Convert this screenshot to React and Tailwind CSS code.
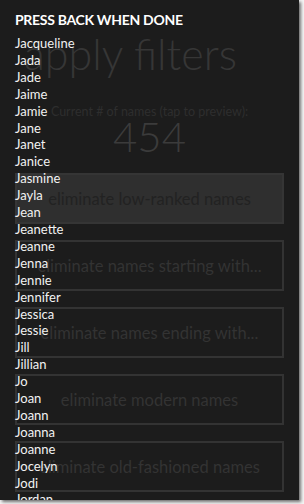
export default function App() {
  const names = [
    "Jacqueline","Jada","Jade","Jaime","Jamie","Jane","Janet","Janice","Jasmine","Jayla","Jean","Jeanette","Jeanne","Jenna","Jennie","Jennifer","Jessica","Jessie","Jill","Jillian","Jo","Joan","Joann","Joanna","Joanne","Jocelyn","Jodi","Jordan",
  ];
  const filters = [
    "eliminate names starting with...",
    "eliminate names ending with...",
    "eliminate modern names",
    "eliminate old-fashioned names",
  ];
  return (
    <div className="w-[304px] h-[504px] bg-[#f4f4f4] overflow-hidden" style={{ fontFamily: "Lato, 'Noto Sans', sans-serif" }}>
      <div className="relative w-[299px] h-[500px] bg-[#1c1c1c] overflow-hidden shadow-[2px_2px_3px_rgba(0,0,0,0.55)]">
        {/* faded page behind */}
        <div className="flex flex-col">
          <div className="pl-[24px] pt-[30px] text-[43px] leading-[48px] font-light text-[#363636]">apply filters</div>
          <div className="mt-[26px] text-center text-[12.5px] leading-[16px] text-[#2e2e2e]">Current # of names (tap to preview):</div>
          <div className="text-center text-[42px] leading-[32px] font-light text-[#3b3b3b]">454</div>
          <div className="mt-[21px] flex flex-col gap-[16px] px-[15px]">
            <div className="h-[51px] border-2 border-[#353535] bg-[#2f2f2f] flex items-center justify-center pt-[2px] text-[16.5px] text-[#222222]">
              eliminate low-ranked names
            </div>
            {filters.map((f) => (
              <div key={f} className="h-[51px] border-2 border-[#333333] flex items-center justify-center pt-[2px] text-[16.5px] text-[#333333]">
                {f}
              </div>
            ))}
          </div>
        </div>
        {/* overlay */}
        <div className="absolute inset-0 pl-[15px] pt-[11px]">
          <div className="text-[14px] leading-[18px] font-bold text-white tracking-[-0.3px]">PRESS BACK WHEN DONE</div>
          <div className="mt-[6px] flex flex-col">
            {names.map((n) => (
              <div key={n} className="text-[13px] leading-[16.9px] text-[#f2f2f2]">{n}</div>
            ))}
          </div>
        </div>
      </div>
    </div>
  );
}
